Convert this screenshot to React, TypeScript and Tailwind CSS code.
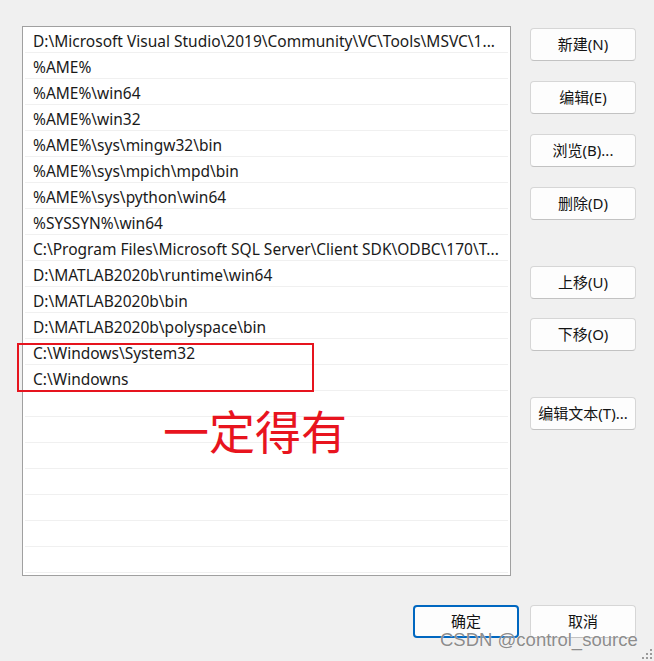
import React from 'react';

const paths = [
    'D:\\Microsoft Visual Studio\\2019\\Community\\VC\\Tools\\MSVC\\1...',
    '%AME%',
    '%AME%\\win64',
    '%AME%\\win32',
    '%AME%\\sys\\mingw32\\bin',
    '%AME%\\sys\\mpich\\mpd\\bin',
    '%AME%\\sys\\python\\win64',
    '%SYSSYN%\\win64',
    'C:\\Program Files\\Microsoft SQL Server\\Client SDK\\ODBC\\170\\T...',
    'D:\\MATLAB2020b\\runtime\\win64',
    'D:\\MATLAB2020b\\bin',
    'D:\\MATLAB2020b\\polyspace\\bin',
    'C:\\Windows\\System32',
    'C:\\Windowns',
];

const rows = [...paths, ...Array(21 - paths.length).fill('')];

const font = { fontFamily: '"Noto Sans", "Noto Sans CJK SC", sans-serif' };

const Button = ({ label, primary }: { label: string; primary?: boolean }) => (
    <button
        className={
            'w-[106px] h-[33px] rounded-[4px] bg-[#fdfdfd] text-[15px] text-[#141414] flex items-center justify-center ' +
            (primary
                ? 'border-2 border-[#0067c0]'
                : 'border border-[#d6d6d6] border-b-[#c2c2c2]')
        }
        style={font}
    >
        {label}
    </button>
);

export default function App() {
    return (
        <div className="relative w-[654px] h-[661px] bg-[#f0f0f0] overflow-hidden" style={font}>
            <div className="flex pt-[26px] pl-[22px]">
                {/* path list */}
                <div className="relative w-[489px] h-[550px] bg-white border border-[#a0a0a0] px-[2px]">
                    {rows.map((p, i) => (
                        <div
                            key={i}
                            className="h-[26px] border-b border-[#f0f0f0] pl-[8px] pt-[4px] flex items-center whitespace-nowrap overflow-hidden text-[15.5px] text-[#1a1a1a]"
                        >
                            {p}
                        </div>
                    ))}

                    {/* annotation */}
                    <div className="absolute left-[-6px] top-[316px] w-[297px] h-[49px] border-2 border-[#e6141e]" />
                    <div
                        className="absolute left-[140px] top-[379px] text-[46px] leading-none text-[#e8141e]"
                        style={{ fontFamily: '"Noto Sans CJK SC", sans-serif' }}
                    >
                        一定得有
                    </div>
                </div>

                {/* side buttons */}
                <div className="ml-[19px] pt-[2px] flex flex-col">
                    <div className="flex flex-col gap-[20px]">
                        <Button label="新建(N)" />
                        <Button label="编辑(E)" />
                        <Button label="浏览(B)..." />
                        <Button label="删除(D)" />
                    </div>
                    <div className="mt-[46px] flex flex-col gap-[19px]">
                        <Button label="上移(U)" />
                        <Button label="下移(O)" />
                    </div>
                    <div className="mt-[46px]">
                        <Button label="编辑文本(T)..." />
                    </div>
                </div>
            </div>

            {/* footer */}
            <div className="flex justify-end gap-[11px] pr-[18px] mt-[29px]">
                <Button label="确定" primary />
                <Button label="取消" />
            </div>

            {/* watermark */}
            <div
                className="absolute left-[440px] top-[626px] text-[18.5px] text-[#7d7d7d]/90"
                style={{ fontFamily: '"Liberation Sans", Arial, sans-serif', textShadow: '0 0 1px #fff' }}
            >
                CSDN @control_source
            </div>

            {/* size grip */}
            <div className="absolute right-[2px] bottom-[2px] grid grid-cols-3 gap-[2px]">
                {[0, 0, 1, 0, 1, 1, 1, 1, 1].map((v, i) => (
                    <div key={i} className={'w-[2px] h-[2px] ' + (v ? 'bg-[#9a9a9a]' : '')} />
                ))}
            </div>
        </div>
    );
}
